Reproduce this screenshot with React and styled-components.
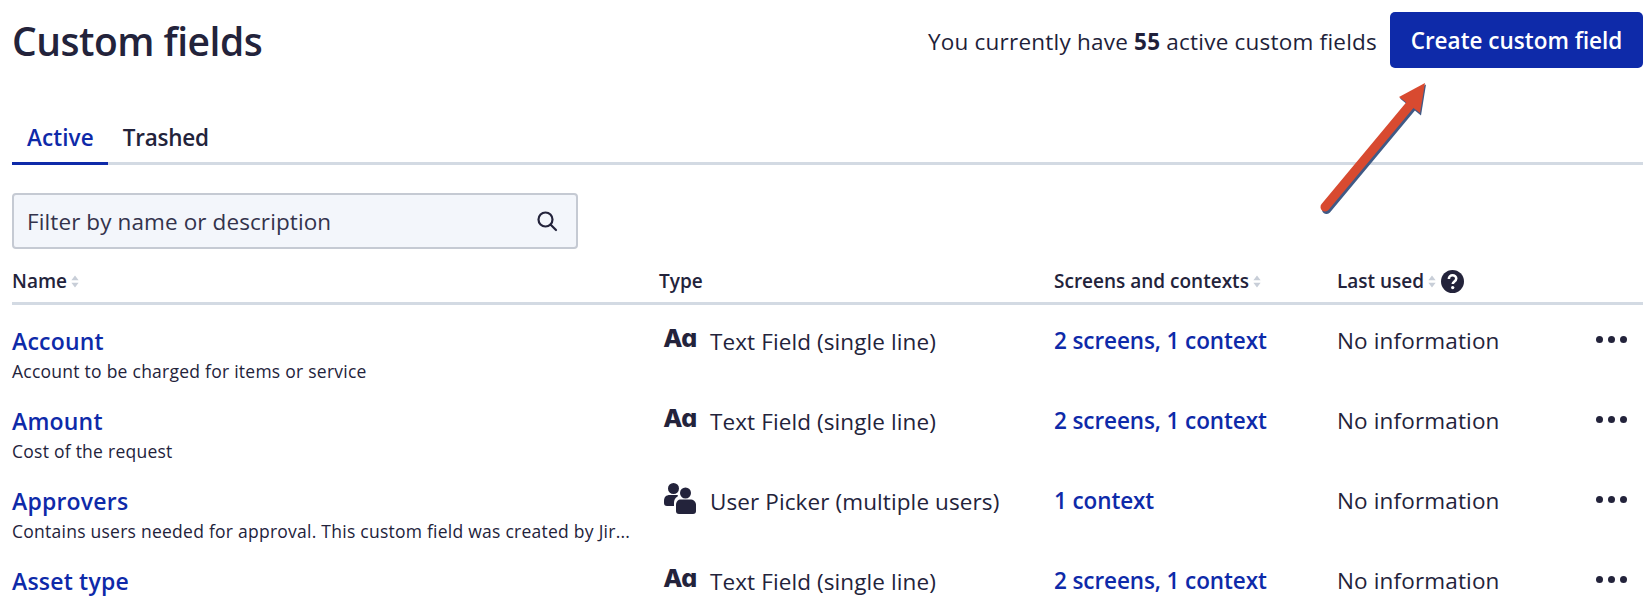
import React from "react";
import styled, { createGlobalStyle } from "styled-components";

const Global = createGlobalStyle`
  html, body { margin: 0; padding: 0; background: #fff; }
  body { font-family: "Open Sans", "Noto Sans", sans-serif; color: #1f1f3a; overflow: hidden; }
`;
const Page = styled.div`
  position: relative; width: 1650px; height: 606px; overflow: hidden;
  padding: 12px 7px 0 12px; box-sizing: border-box;
`;
const Header = styled.header`
  display: flex; justify-content: space-between; align-items: center; height: 56px;
`;
const Title = styled.h1`
  margin: 0; padding-top: 2px; font-size: 39px; line-height: 56px; font-weight: 600; color: #23233b; letter-spacing: -0.5px;
`;
const HeaderRight = styled.div`display: flex; align-items: center; gap: 13px;`;
const Count = styled.span`
  font-size: 22.5px; color: #1f1f3a; letter-spacing: 0.22px; padding-top: 2px;
  b { font-weight: 700; }
`;
const CreateButton = styled.button`
  width: 253px; height: 56px; border: 0; border-radius: 5px; background: #0e2aa9; color: #fff;
  font: 600 22.5px "Open Sans", sans-serif; letter-spacing: 0; padding: 0;
`;
const Tabs = styled.div`
  display: flex; margin-top: 41px; height: 56px; box-sizing: border-box; border-bottom: 3px solid #d3dae3;
  align-items: stretch;
`;
const Tab = styled.div`
  display: flex; align-items: center; justify-content: center; box-sizing: border-box;
  height: 56px; padding: 4px ${p => p.$right}px 0 ${p => p.$left}px; font-size: 22.5px; font-weight: 600; letter-spacing: ${p => p.$track}px;
  color: ${p => (p.$active ? "#0e2aa9" : "#23233b")};
  border-bottom: 3px solid ${p => (p.$active ? "#0e2aa9" : "transparent")};
`;
const Search = styled.div`
  display: flex; align-items: center; justify-content: space-between; box-sizing: border-box;
  width: 566px; height: 56px; margin-top: 28px; padding: 0 18px 0 13px;
  background: #f3f6fb; border: 2px solid #c5cad3; border-radius: 4px;
  font-size: 22.5px; color: #33334c; letter-spacing: 0.1px;
`;
const Grid = styled.div`
  display: grid; grid-template-columns: 647px 395px 283px 1fr;
`;
const HeadRow = styled(Grid)`
  margin-top: 15px; height: 41px; box-sizing: border-box; border-bottom: 3px solid #d3dae3; align-items: center;
`;
const HeadCell = styled.div`
  display: flex; align-items: center; font-size: 19px; font-weight: 600; color: #23233b; letter-spacing: 0; padding-bottom: 4px;
`;
const Row = styled(Grid)`height: 80px; padding-top: 21px; box-sizing: border-box;`;
const NameLink = styled.div`font-size: 23px; line-height: 30px; font-weight: 600; color: #0e2aa9; letter-spacing: 0.2px;`;
const Desc = styled.div`
  font-size: 17.5px; line-height: 30px; color: #23233b; letter-spacing: 0.25px; white-space: nowrap;
`;
const TypeCell = styled.div`
  display: flex; align-items: center; gap: 14px; height: 30px; padding-left: 5px; font-size: 22.5px; color: #23233b; letter-spacing: 0.1px;
`;
const IconBox = styled.span`display: inline-flex; width: 32px; height: 28px; flex: none; align-items: center; justify-content: center; margin-top: -6px;`;
const AaMark = styled.span`
  font-family: Inter, sans-serif; font-feature-settings: "cv11"; font-size: 25px; font-weight: 800; letter-spacing: -0.5px; line-height: 28px; color: #23233b;
`;
const ContextLink = styled.div`font-size: 22.5px; line-height: 30px; font-weight: 600; color: #0e2aa9; letter-spacing: -0.1px;`;
const LastCell = styled.div`display: flex; justify-content: space-between; font-size: 22.5px; line-height: 30px; color: #23233b; letter-spacing: 0.15px;`;
const Dots = styled.span`display: inline-flex; gap: 5px; align-items: center; height: 26px; margin-right: 16px;`;
const Dot = styled.i`width: 7px; height: 7px; border-radius: 50%; background: #23233b;`;
const ArrowLayer = styled.svg`position: absolute; left: 1297px; top: 70px;`;
const SortMark = styled.svg`margin-left: 3px; flex: none;`;
const HelpMark = styled.svg`margin-left: 4px; flex: none;`;

const Sort = () => (
  <SortMark width="10" height="15" viewBox="0 0 11 16">
    <path d="M5.5 1.5 9.5 6.5H1.5Z M5.5 14.5 9.5 9.5H1.5Z" fill="#c8ced8" />
  </SortMark>
);
const People = () => (
  <svg width="32" height="32" viewBox="0 0 32 32" fill="#23233b">
    <circle cx="9.5" cy="6.5" r="5.5" />
    <circle cx="21.5" cy="11" r="5.5" />
    <path d="M0 19c0-4 2-6 6-6h7c1 0 1.500 1 .5 1.500C11 16 10 18 10 21v3H3c-2 0-3-1-3-3Z" />
    <path d="M12 23c0-3.500 2-5.500 5-5.500h9c3.500 0 6 2 6 5.500v6c0 2-1 3-3 3H15c-2 0-3-1-3-3Z" />
  </svg>
);
const rows = [
  ["Account", "Account to be charged for items or service", "t", "2 screens, 1 context"],
  ["Amount", "Cost of the request", "t", "2 screens, 1 context"],
  ["Approvers", "Contains users needed for approval. This custom field was created by Jir...", "u", "1 context"],
  ["Asset type", "", "t", "2 screens, 1 context"],
];

export default function App() {
  return (
    <Page>
      <Global />
      <Header>
        <Title>Custom fields</Title>
        <HeaderRight>
          <Count>You currently have <b>55</b> active custom fields</Count>
          <CreateButton>Create custom field</CreateButton>
        </HeaderRight>
      </Header>
      <Tabs>
        <Tab $active $left={15} $right={14} $track={0.1}>Active</Tab>
        <Tab $left={15} $right={14} $track={-0.25}>Trashed</Tab>
      </Tabs>
      <Search>
        <span>Filter by name or description</span>
        <svg width="22" height="22" viewBox="0 0 22 22" fill="none" stroke="#23233b" strokeWidth="2.200">
          <circle cx="9.500" cy="9.500" r="7" />
          <path d="M14.500 14.500 20 20" strokeLinecap="round" />
        </svg>
      </Search>
      <HeadRow>
        <HeadCell>Name<Sort /></HeadCell>
        <HeadCell>Type</HeadCell>
        <HeadCell>Screens and contexts<Sort /></HeadCell>
        <HeadCell>
          Last used<Sort />
          <HelpMark width="23" height="23" viewBox="0 0 22 22">
            <circle cx="11" cy="11" r="11" fill="#23233b" />
            <path d="M7.500 8.500c0-2 1.500-3.500 3.500-3.500s3.600 1.300 3.600 3.200c0 2.800-3.400 2.800-3.400 5.300" fill="none" stroke="#fff" strokeWidth="2.400" />
            <circle cx="11.200" cy="16.800" r="1.600" fill="#fff" />
          </HelpMark>
        </HeadCell>
      </HeadRow>
      {rows.map(([name, desc, type, ctx]) => (
        <Row key={name}>
          <div>
            <NameLink>{name}</NameLink>
            <Desc>{desc}</Desc>
          </div>
          <TypeCell>
            <IconBox>{type === "t" ? <AaMark>Aa</AaMark> : <People />}</IconBox>
            {type === "t" ? "Text Field (single line)" : "User Picker (multiple users)"}
          </TypeCell>
          <ContextLink>{ctx}</ContextLink>
          <LastCell>
            No information
            <Dots><Dot /><Dot /><Dot /></Dots>
          </LastCell>
        </Row>
      ))}
      <ArrowLayer width="140" height="150" viewBox="0 0 140 150">
        <path d="M28 138 113 36" stroke="#3f5a86" strokeWidth="9" strokeLinecap="round" transform="translate(1.500 1.500)" />
        <path d="M128 13 123 44 102 27Z" fill="#3f5a86" transform="translate(1 1.500)" />
        <path d="M28 137 113 35" stroke="#d84a30" strokeWidth="9" strokeLinecap="round" />
        <path d="M128 13 123 43 102 27Z" fill="#d84a30" />
      </ArrowLayer>
    </Page>
  );
}
